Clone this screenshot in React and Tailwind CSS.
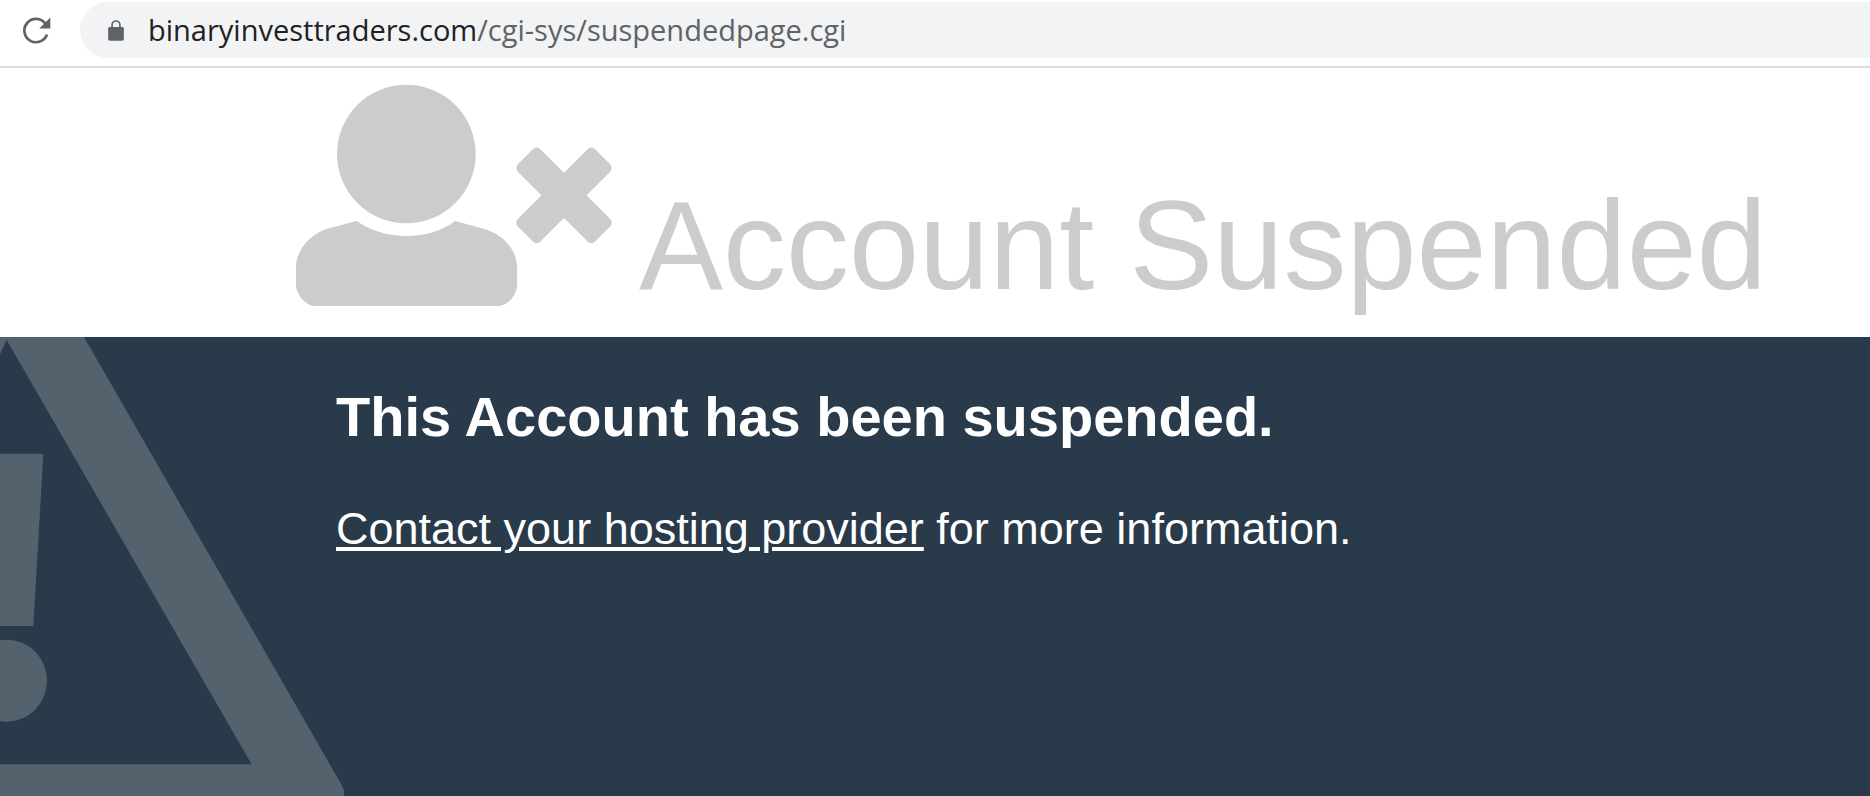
import React from 'react';

const ReloadIcon = () => (
  <svg viewBox="0 0 84 80" className="w-7 h-[27px]" aria-hidden="true">
    <path d="M67 19 A35 35 0 1 0 72 52" fill="none" stroke="#5f6368" strokeWidth="8" />
    <path d="M82 1 V34 H49 Z" fill="#5f6368" />
  </svg>
);

const LockIcon = () => (
  <svg viewBox="0 0 48 64" className="w-4 h-[21px]" aria-hidden="true">
    <path d="M12 24 V15 A12 12 0 0 1 36 15 V24" fill="none" stroke="#5f6368" strokeWidth="5" />
    <rect x="0" y="21" width="48" height="42" rx="5" fill="#5f6368" />
  </svg>
);

const UserTimesIcon = () => (
  <svg viewBox="48 42 948 666" className="w-[316px] h-[222px] shrink-0 mb-[3px]" fill="#cccccc" aria-hidden="true">
    <circle cx="379" cy="252" r="208" />
    <path d="M230 453 Q296 498 380 498 Q464 498 526 453 L610 476 C670 492 711 540 711 592 V650 C706 680 685 702 660 708 H98 C75 700 54 680 48 650 V592 C48 540 90 490 150 474 Z" />
    <g transform="rotate(45 852 376)">
      <rect x="688" y="328" width="328" height="96" rx="16" />
      <rect x="804" y="212" width="96" height="328" rx="16" />
    </g>
  </svg>
);

const WarningIcon = () => (
  <svg
    viewBox="0 51 1080 1377"
    className="absolute left-0 top-0 w-[360px] h-[459px]"
    fill="#54626e"
    aria-hidden="true"
  >
    <path
      fillRule="evenodd"
      d="M0 51 H252 L1013 1374 Q1028 1398 1032 1412 V1428 H0 V1333 H755 L20 60 L0 103 Z"
    />
    <path d="M0 401 H130 L100 918 H0 Z" />
    <ellipse cx="20" cy="1082" rx="121" ry="123" />
  </svg>
);

const AddressBar = () => (
  <div className="flex items-center h-[68px] pt-[2px] pb-2 pl-[23px] border-b-2 border-[#dadbdc]">
    <button type="button" aria-label="Reload">
      <ReloadIcon />
    </button>
    <div className="flex flex-1 items-center h-14 ml-[29px] pl-7 rounded-l-full bg-[#f1f3f4]">
      <LockIcon />
      <span className="ml-6 pb-[2px] text-[29px] leading-none whitespace-nowrap text-[#5f6368] font-['Open_Sans',sans-serif]">
        <span className="text-[#202124]">binaryinvesttraders.com</span>/cgi-sys/suspendedpage.cgi
      </span>
    </div>
  </div>
);

const App = () => {
  return (
    <div className="flex flex-col min-h-screen bg-white font-['Liberation_Sans',Arial,sans-serif]">
      <AddressBar />

      <header className="flex items-end gap-[27px] pt-4 pb-7 pl-[296px]">
        <UserTimesIcon />
        <h1 className="text-[126px] leading-none whitespace-nowrap text-[#cccccc]">Account Suspended</h1>
      </header>

      <main className="relative flex-1 overflow-hidden bg-[#293a4a] text-white">
        <WarningIcon />
        <section className="relative pt-[52px] pl-[336px]">
          <h2 className="text-[56px] leading-none font-bold">This Account has been suspended.</h2>
          <p className="mt-[61px] text-[45px] leading-none">
            <a href="#contact" className="underline decoration-4 underline-offset-3">
              Contact your hosting provider
            </a>{' '}
            for more information.
          </p>
        </section>
      </main>
    </div>
  );
};

export default App;
